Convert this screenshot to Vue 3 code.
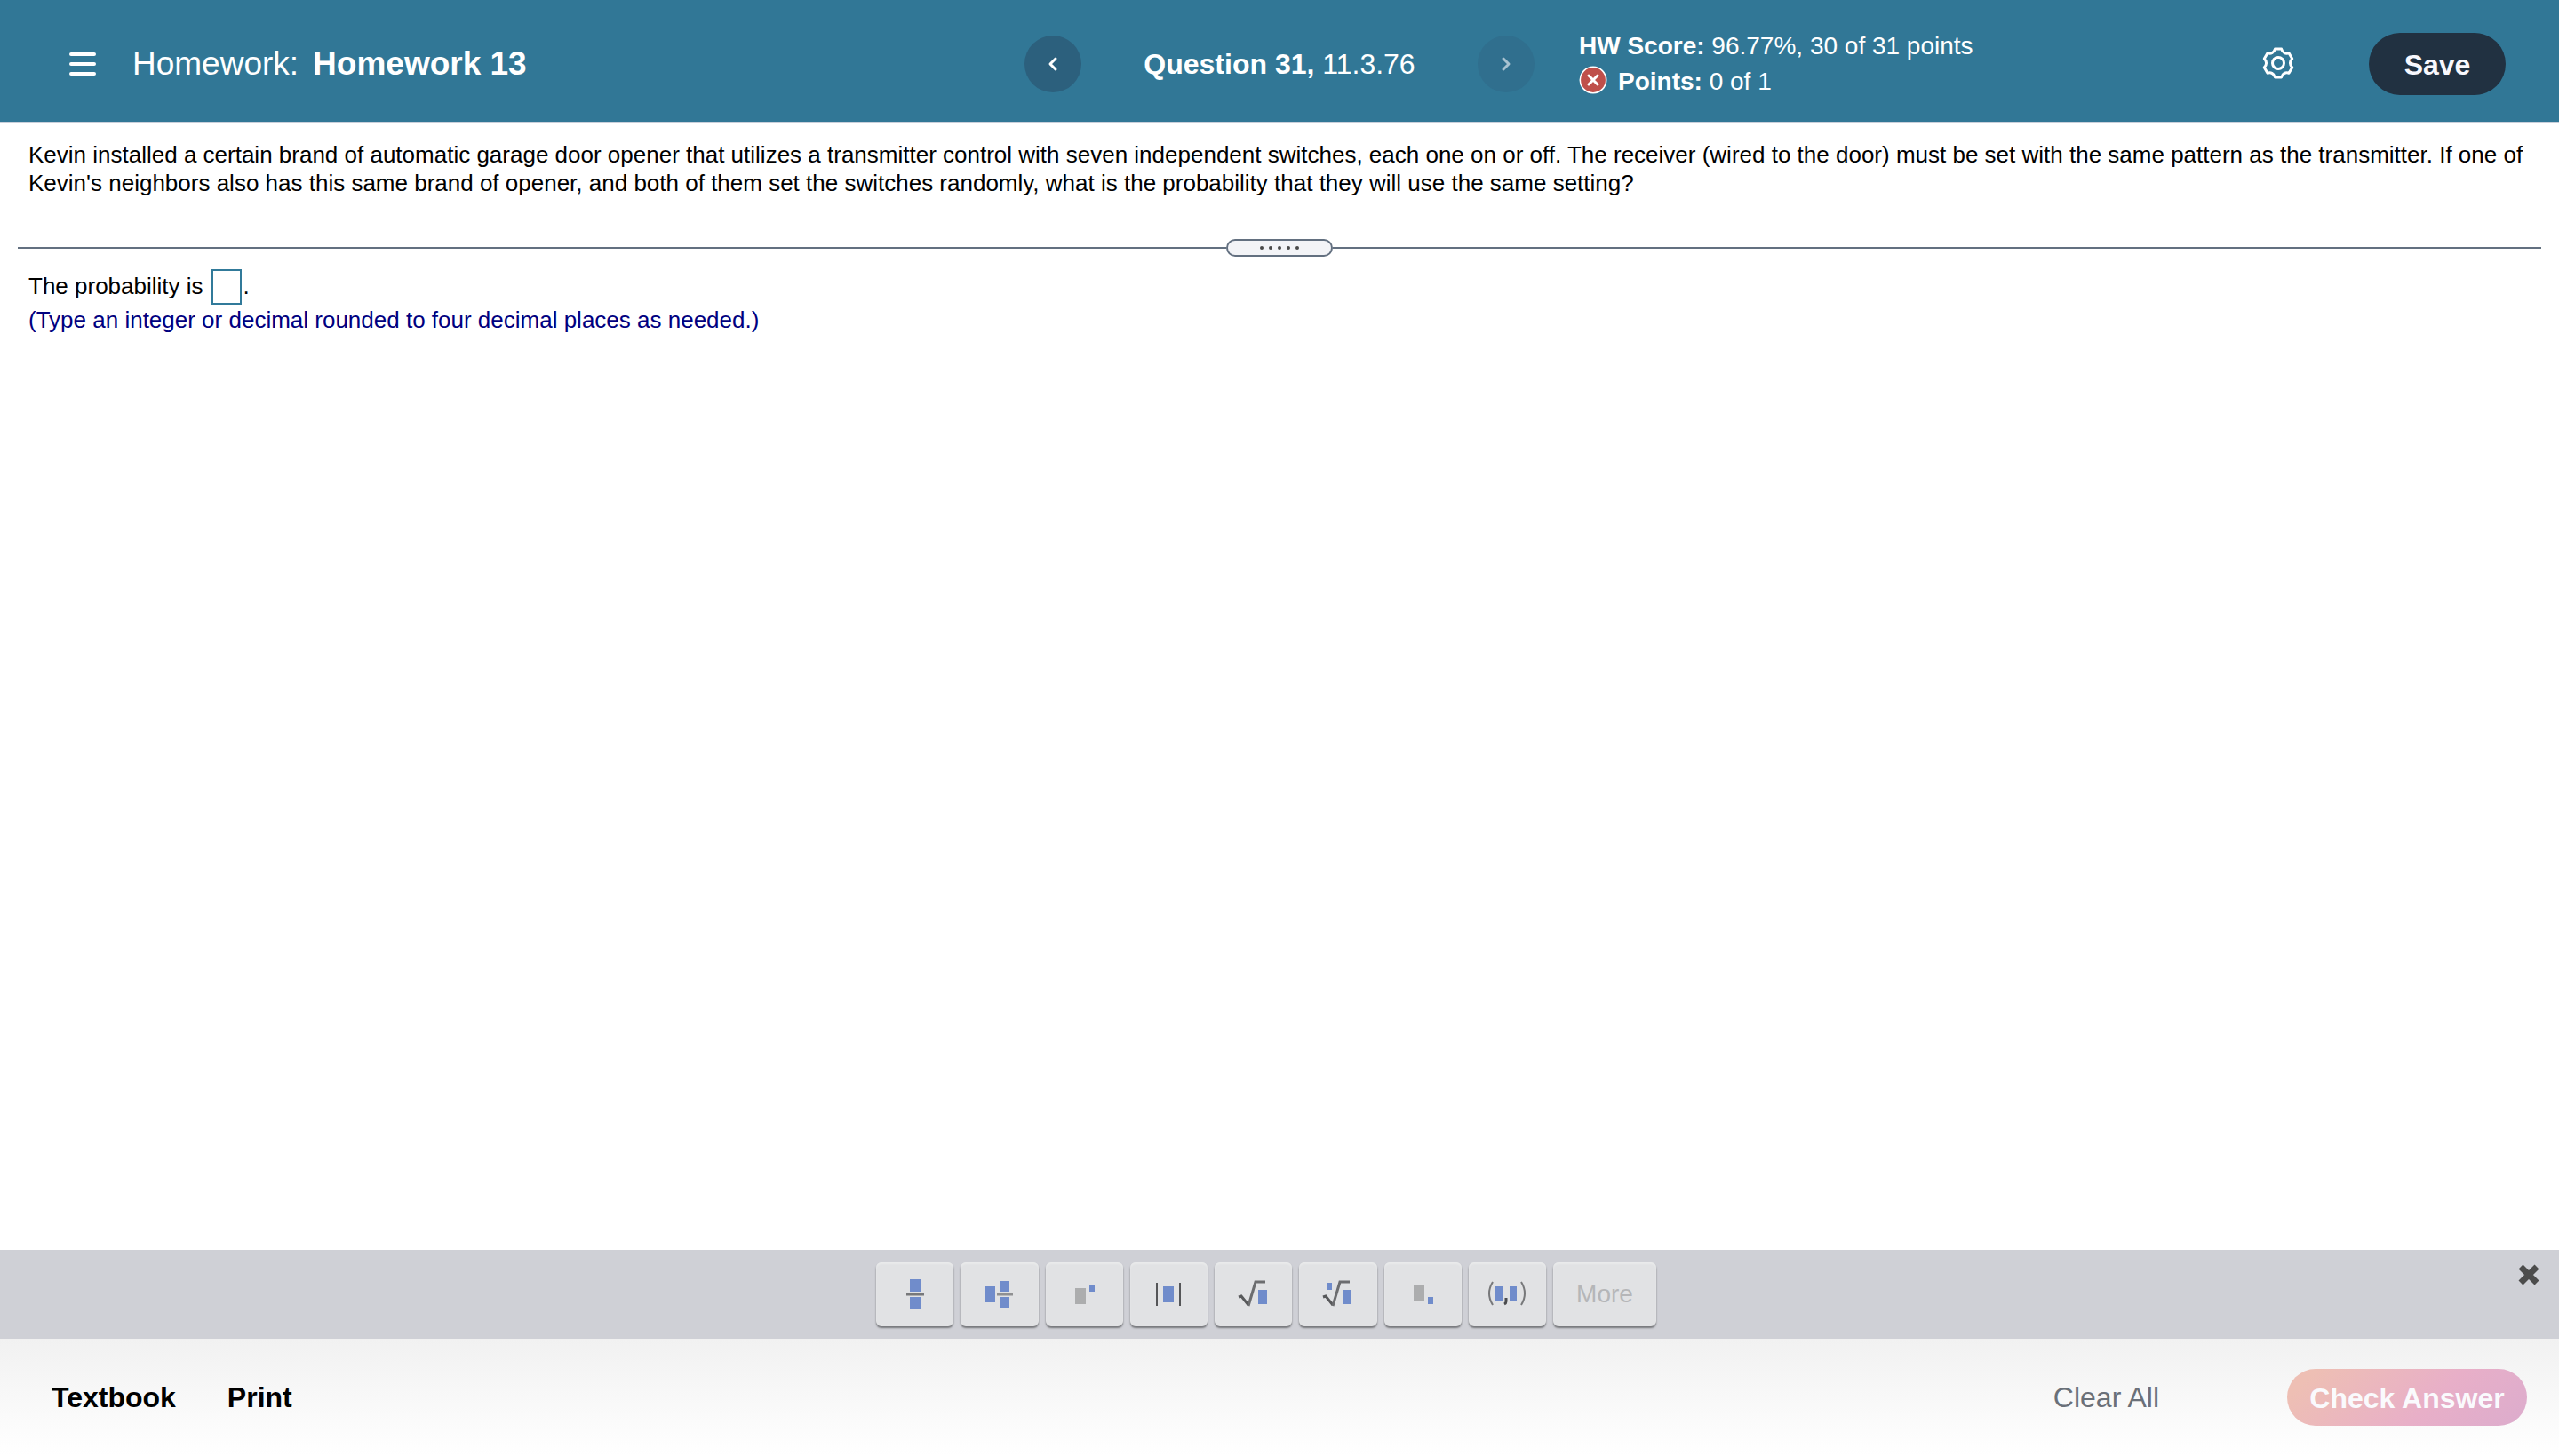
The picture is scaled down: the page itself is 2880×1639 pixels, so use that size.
<script setup>
import { ref } from 'vue'

const answer = ref('')
const showPalette = ref(true)

// math templates available in the palette
const templates = [
  { id: 'fraction', label: 'Fraction' },
  { id: 'mixed', label: 'Mixed number' },
  { id: 'exponent', label: 'Exponent' },
  { id: 'absolute', label: 'Absolute value' },
  { id: 'sqrt', label: 'Square root' },
  { id: 'nroot', label: 'Nth root' },
  { id: 'subscript', label: 'Subscript' },
  { id: 'pair', label: 'Ordered pair' }
]

const clearAll = () => {
  answer.value = ''
}
</script>

<template>
  <div class="player">
    <header class="topbar">
      <div class="title">
        <button class="icon-btn" aria-label="Menu">
          <svg width="30" height="26" viewBox="0 0 30 26">
            <path d="M2 2h26M2 13h26M2 24h26" stroke="#fff" stroke-width="4" stroke-linecap="round" />
          </svg>
        </button>
        <h1><span>Homework:</span> <strong>Homework 13</strong></h1>
      </div>

      <nav class="question-nav">
        <button class="round" aria-label="Previous question">
          <svg width="12" height="18" viewBox="0 0 12 18">
            <path d="M9 3L3 9l6 6" fill="none" stroke="#fff" stroke-width="3" stroke-linecap="round" stroke-linejoin="round" />
          </svg>
        </button>
        <h2><strong>Question 31,</strong> 11.3.76</h2>
        <button class="round disabled" aria-label="Next question" disabled>
          <svg width="12" height="18" viewBox="0 0 12 18">
            <path d="M3 3l6 6-6 6" fill="none" stroke="#a9c2d0" stroke-width="3" stroke-linecap="round" stroke-linejoin="round" />
          </svg>
        </button>
      </nav>

      <div class="right">
        <div class="score">
          <p><strong>HW Score:</strong> 96.77%, 30 of 31 points</p>
          <p class="points">
            <svg width="32" height="36" viewBox="0 0 32 36">
              <circle cx="16" cy="16" r="14.7" fill="#bf4f4a" stroke="#fff" stroke-width="1.6" />
              <path d="M11 11l10 10M21 11L11 21" stroke="#fff" stroke-width="3" stroke-linecap="round" />
            </svg>
            <span><strong>Points:</strong> 0 of 1</span>
          </p>
        </div>
        <button class="icon-btn settings" aria-label="Settings">
          <svg width="36" height="38" viewBox="-18 -18 36 38" fill="none" stroke="#fff" stroke-width="3" stroke-linejoin="round">
            <path
              d="M-3.600-16H3.600C4.600-12 8.100-10 12-11.200L15.700-4.900C12.700-2 12.700 2 15.700 4.900L12 11.200C8.100 10 4.600 12 3.600 16H-3.600C-4.600 12-8.100 10-12 11.200L-15.700 4.900C-12.700 2-12.700-2-15.700-4.900L-12-11.200C-8.100-10-4.600-12-3.600-16z"
            />
            <circle r="6.500" />
          </svg>
        </button>
        <button class="save">Save</button>
      </div>
    </header>

    <main class="content">
      <p class="problem">
        Kevin installed a certain brand of automatic garage door opener that utilizes a transmitter control with seven independent switches, each one on or off. The receiver (wired to the door) must be set with the same pattern as the transmitter. If one of Kevin's neighbors also has this same brand of opener, and both of them set the switches randomly, what is the probability that they will use the same setting?
      </p>

      <div class="divider">
        <button class="handle" aria-label="Resize panels">
          <i v-for="n in 5" :key="n"></i>
        </button>
      </div>

      <div class="answer">
        <div class="answer-line">
          <label for="answer">The probability is</label>
          <input id="answer" v-model="answer" type="text" />
          <span>.</span>
        </div>
        <p class="hint">(Type an integer or decimal rounded to four decimal places as needed.)</p>
      </div>
    </main>

    <section v-if="showPalette" class="palette">
      <div class="keys">
        <button v-for="t in templates" :key="t.id" class="key" :aria-label="t.label">
          <svg width="44" height="36" viewBox="0 0 44 36">
            <g v-if="t.id === 'fraction'">
              <path d="M16 1h12v14H16zM16 21h12v14H16z" fill="#708ccb" />
              <path d="M12 18h20" stroke="#77787a" stroke-width="3" />
            </g>
            <g v-else-if="t.id === 'mixed'">
              <path d="M5 9h12v18H5zM23 3h10v12H23zM23 21h10v12H23z" fill="#708ccb" />
              <path d="M19 18h18" stroke="#8f9092" stroke-width="3" />
            </g>
            <g v-else-if="t.id === 'exponent'">
              <path d="M12 11h12v18H12z" fill="#acadae" />
              <path d="M28 7h6v8h-6z" fill="#708ccb" />
            </g>
            <g v-else-if="t.id === 'absolute'">
              <path d="M16 9h12v18H16z" fill="#708ccb" />
              <path d="M9 5v26M35 5v26" stroke="#555658" stroke-width="2" />
            </g>
            <g v-else-if="t.id === 'sqrt' || t.id === 'nroot'">
              <path v-if="t.id === 'nroot'" d="M9 5h6v8H9z" fill="#708ccb" />
              <path d="M27 13h10v16H27z" fill="#708ccb" />
              <path d="M5 21l3-1 8 10" fill="none" stroke="#58595b" stroke-width="3" />
              <path d="M16 31l8-27h11" fill="none" stroke="#6c6d6f" stroke-width="3" />
            </g>
            <g v-else-if="t.id === 'subscript'">
              <path d="M12 7h12v18H12z" fill="#acadae" />
              <path d="M28 21h6v8h-6z" fill="#708ccb" />
            </g>
            <g v-else>
              <path d="M9 9h8v16H9zM25 9h8v16h-8z" fill="#708ccb" />
              <path d="M6 4q-8 13 0 26M38 4q8 13 0 26" fill="none" stroke="#77787a" stroke-width="2" />
              <path d="M21 22v4q0 2-2 3" fill="none" stroke="#4b4c4e" stroke-width="3" />
            </g>
          </svg>
        </button>
        <button class="key more" disabled>More</button>
      </div>
      <button class="close" aria-label="Close palette" @click="showPalette = false">
        <svg width="24" height="24" viewBox="0 0 24 24">
          <path d="M3 3l18 18M21 3L3 21" stroke="#4c4c4c" stroke-width="7" />
        </svg>
      </button>
    </section>

    <footer class="bottombar">
      <button class="link">Textbook</button>
      <button class="link">Print</button>
      <button class="clear" @click="clearAll">Clear All</button>
      <button class="check" disabled>Check Answer</button>
    </footer>
  </div>
</template>

<style>
body {
  margin: 0;
}
</style>

<style scoped>
.player {
  display: flex;
  flex-direction: column;
  min-height: 100vh;
  background: #fff;
  color: #000;
  font-family: "Liberation Sans", Arial, sans-serif;
  font-size: 26px;
  line-height: 32px;
}
.player * {
  box-sizing: border-box;
}
h1, h2, p {
  margin: 0;
  font-weight: normal;
}
button {
  border: none;
  padding: 0;
  background: none;
  font-family: inherit;
  cursor: pointer;
}
svg {
  display: block;
}

/* header */
.topbar {
  display: grid;
  grid-template-columns: 1fr 574px 1fr;
  align-items: center;
  padding: 6px 60px 0;
  height: 139px;
  border-bottom: 2px solid #c9cfda;
  background: #317796;
  color: #fff;
}
.title {
  display: flex;
  align-items: center;
  gap: 41px;
  padding-left: 18px;
}
.title h1 {
  display: flex;
  gap: 16px;
  font-size: 37px;
  line-height: 40px;
}
.question-nav {
  display: flex;
  align-items: center;
  justify-content: space-between;
}
.question-nav h2 {
  font-size: 32px;
  line-height: 40px;
}
.round {
  display: flex;
  align-items: center;
  justify-content: center;
  width: 64px;
  height: 64px;
  border-radius: 50%;
  background: #2c607d;
}
.round.disabled {
  background: #306f8e;
}
.right {
  display: flex;
  align-items: center;
  padding-left: 50px;
}
.score {
  font-size: 28px;
  line-height: 40px;
}
.points {
  display: flex;
  align-items: center;
  gap: 12px;
}
.settings {
  margin-left: auto;
}
.save {
  margin-left: 84px;
  padding-top: 3px;
  width: 154px;
  height: 70px;
  border-radius: 35px;
  background: #213141;
  color: #f8f8fd;
  font-size: 32px;
  font-weight: bold;
}

/* question */
.content {
  flex: 1;
  padding: 19px 20px;
}
.problem {
  padding: 0 12px;
}
.divider {
  display: flex;
  align-items: center;
  margin-top: 47px;
}
.divider::before,
.divider::after {
  content: "";
  flex: 1;
  height: 2px;
  background: #637080;
}
.handle {
  display: flex;
  align-items: center;
  justify-content: center;
  gap: 6px;
  width: 120px;
  height: 20px;
  border: 2px solid #637080;
  border-radius: 10px;
  background: #f3f4f7;
}
.handle i {
  width: 4px;
  height: 4px;
  border-radius: 50%;
  background: #4a4a4a;
}
.answer {
  padding: 14px 12px;
}
.answer-line {
  display: flex;
  line-height: 38px;
}
.answer-line input {
  margin: 0 2px 0 9px;
  width: 34px;
  height: 40px;
  border: 2px solid #317a9a;
  padding: 0 4px;
  font: inherit;
  outline: none;
}
.hint {
  color: #000080;
  line-height: 34px;
}

/* math palette */
.palette {
  display: flex;
  justify-content: center;
  position: relative;
  padding: 14px 30px 14px 0;
  background: #cfd0d6;
}
.keys {
  display: grid;
  grid-template-columns: repeat(8, 1fr) 116px;
  gap: 8px;
  width: 878px;
}
.key {
  display: flex;
  align-items: center;
  justify-content: center;
  height: 72px;
  border-radius: 6px;
  background: #e1e2e4;
  box-shadow: 0 2px 2px #77787c, inset 0 2px 2px #e9eaeb;
}
.more {
  color: #b5b6b8;
  font-size: 28px;
}
.close {
  position: absolute;
  top: 16px;
  right: 22px;
}

/* footer */
.bottombar {
  display: flex;
  align-items: center;
  padding: 34px 36px 34px 58px;
  background: linear-gradient(#f1f1f1, #fff);
}
.bottombar button {
  font-size: 32px;
}
.link {
  margin-right: 58px;
  color: #000;
  font-weight: bold;
}
.clear {
  margin-left: auto;
  color: #6a7079;
}
.bottombar .check {
  margin-left: 144px;
  padding-top: 3px;
  width: 270px;
  height: 64px;
  border-radius: 32px;
  background: linear-gradient(135deg, #eebfb4 10%, #e8afc8 60%, #dcaccd);
  color: #fafafd;
  font-weight: bold;
}
</style>
